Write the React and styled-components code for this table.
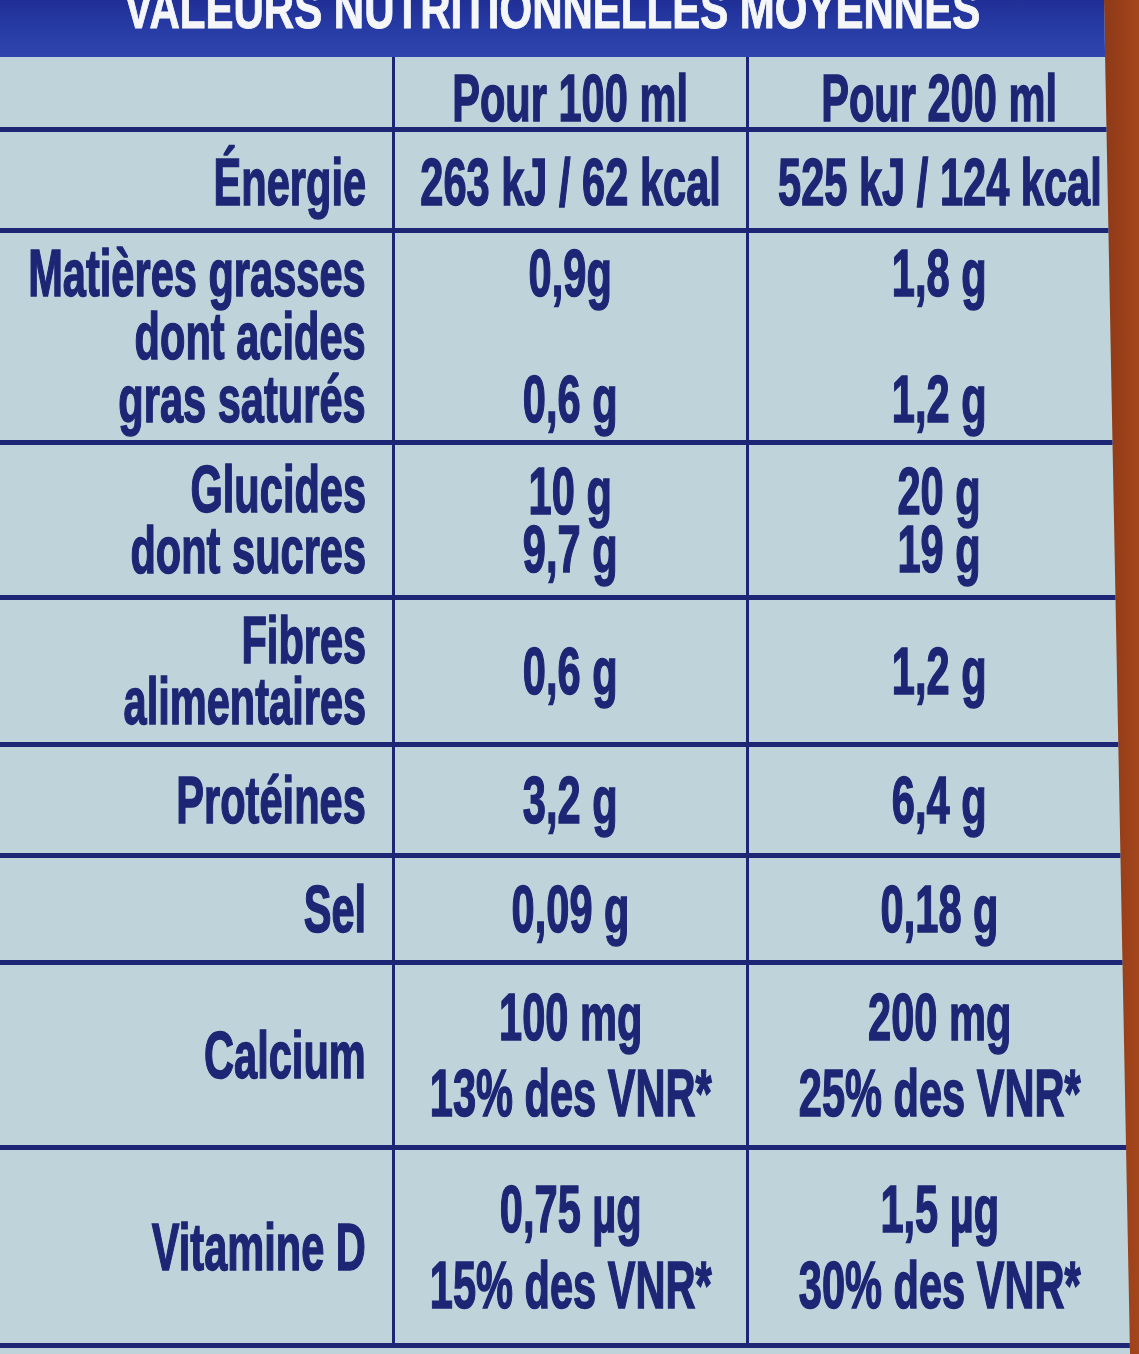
import React from "react";
import styled, { createGlobalStyle } from "styled-components";

const GlobalStyle = createGlobalStyle`
  html, body {
    margin: 0;
    padding: 0;
    background: #6e2a12;
  }
`;

const NAVY = "#1c2674";

const Page = styled.div`
  width: 1139px;
  height: 1354px;
  overflow: hidden;
  background: linear-gradient(90deg, #c4561f 0, #c4561f 7px, #7a2e12 8px, #6a2410 92%, #a4461c 100%);
`;

const Panel = styled.div`
  width: 1130px;
  height: 100%;
  background: #bed4da;
  clip-path: polygon(0 0, 1104px 0, 1130px 100%, 0 100%);
  display: flex;
  flex-direction: column;
`;

const Banner = styled.div`
  height: 57px;
  flex: none;
  overflow: hidden;
  background: linear-gradient(180deg, #1f2f96 0%, #2b40aa 70%, #3046ad 100%);
  display: flex;
  justify-content: center;
  padding-right: 26px;
`;

const BannerText = styled.div`
  margin-top: -19px;
  font-family: "Liberation Sans", Arial, sans-serif;
  font-weight: 700;
  font-size: 56px;
  line-height: 56px;
  color: #f4f6f8;
  white-space: nowrap;
  -webkit-text-stroke: 1px #f4f6f8;
  transform: scaleX(0.75);
  transform-origin: center;
`;

const Row = styled.div`
  display: grid;
  grid-template-columns: 392px 354px 1fr;
  height: ${(p) => p.$h}px;
  flex: none;
  box-sizing: border-box;
  border-bottom: 5px solid ${NAVY};
`;

const Cell = styled.div`
  display: flex;
  align-items: center;
  justify-content: ${(p) => (p.$label ? "flex-end" : "center")};
  padding-right: ${(p) => (p.$label ? 26 : 0)}px;
  padding-top: ${(p) => p.$pt || 0}px;
  border-left: ${(p) => (p.$label ? 0 : 3)}px solid ${NAVY};
  box-sizing: border-box;
  min-width: 0;
`;

const Stack = styled.div`
  font-family: "Liberation Sans", Arial, sans-serif;
  font-weight: 700;
  font-size: 66px;
  line-height: ${(p) => p.$lh || 66}px;
  color: ${NAVY};
  -webkit-text-stroke: 1.5px ${NAVY};
  white-space: nowrap;
  text-align: ${(p) => (p.$label ? "right" : "center")};
  transform: scaleX(0.63);
  transform-origin: ${(p) => (p.$label ? "right center" : "center center")};
`;

const Line = styled.div``;

const rows = [
  { h: 75, label: [], a: ["Pour 100 ml"], b: ["Pour 200 ml"], pt: 8 },
  { h: 101, label: ["Énergie"], a: ["263 kJ / 62 kcal"], b: ["525 kJ / 124 kcal"], pt: 4 },
  {
    h: 212,
    label: ["Matières grasses", "dont acides", "gras saturés"],
    a: ["0,9g", "\u00a0", "0,6 g"],
    b: ["1,8 g", "\u00a0", "1,2 g"],
    lh: 63,
  },
  { h: 155, label: ["Glucides", "dont sucres"], a: ["10 g", "9,7 g"], b: ["20 g", "19 g"], lh: 61, vlh: 58 },
  { h: 147, label: ["Fibres", "alimentaires"], a: ["0,6 g"], b: ["1,2 g"], lh: 61 },
  { h: 111, label: ["Protéines"], a: ["3,2 g"], b: ["6,4 g"] },
  { h: 107, label: ["Sel"], a: ["0,09 g"], b: ["0,18 g"] },
  { h: 185, label: ["Calcium"], a: ["100 mg", "13% des VNR*"], b: ["200 mg", "25% des VNR*"], vlh: 76 },
  { h: 198, label: ["Vitamine D"], a: ["0,75 µg", "15% des VNR*"], b: ["1,5 µg", "30% des VNR*"], vlh: 76 },
];

const Lines = ({ items }) => items.map((t, i) => <Line key={i}>{t}</Line>);

export default function App() {
  return (
    <Page>
      <GlobalStyle />
      <Panel>
        <Banner>
          <BannerText>VALEURS NUTRITIONNELLES MOYENNES</BannerText>
        </Banner>
        {rows.map((r, i) => (
          <Row key={i} $h={r.h}>
            <Cell $label $pt={r.pt}>
              <Stack $label $lh={r.lh}>
                <Lines items={r.label} />
              </Stack>
            </Cell>
            <Cell $pt={r.pt}>
              <Stack $lh={r.vlh || r.lh}>
                <Lines items={r.a} />
              </Stack>
            </Cell>
            <Cell $pt={r.pt}>
              <Stack $lh={r.vlh || r.lh}>
                <Lines items={r.b} />
              </Stack>
            </Cell>
          </Row>
        ))}
      </Panel>
    </Page>
  );
}
